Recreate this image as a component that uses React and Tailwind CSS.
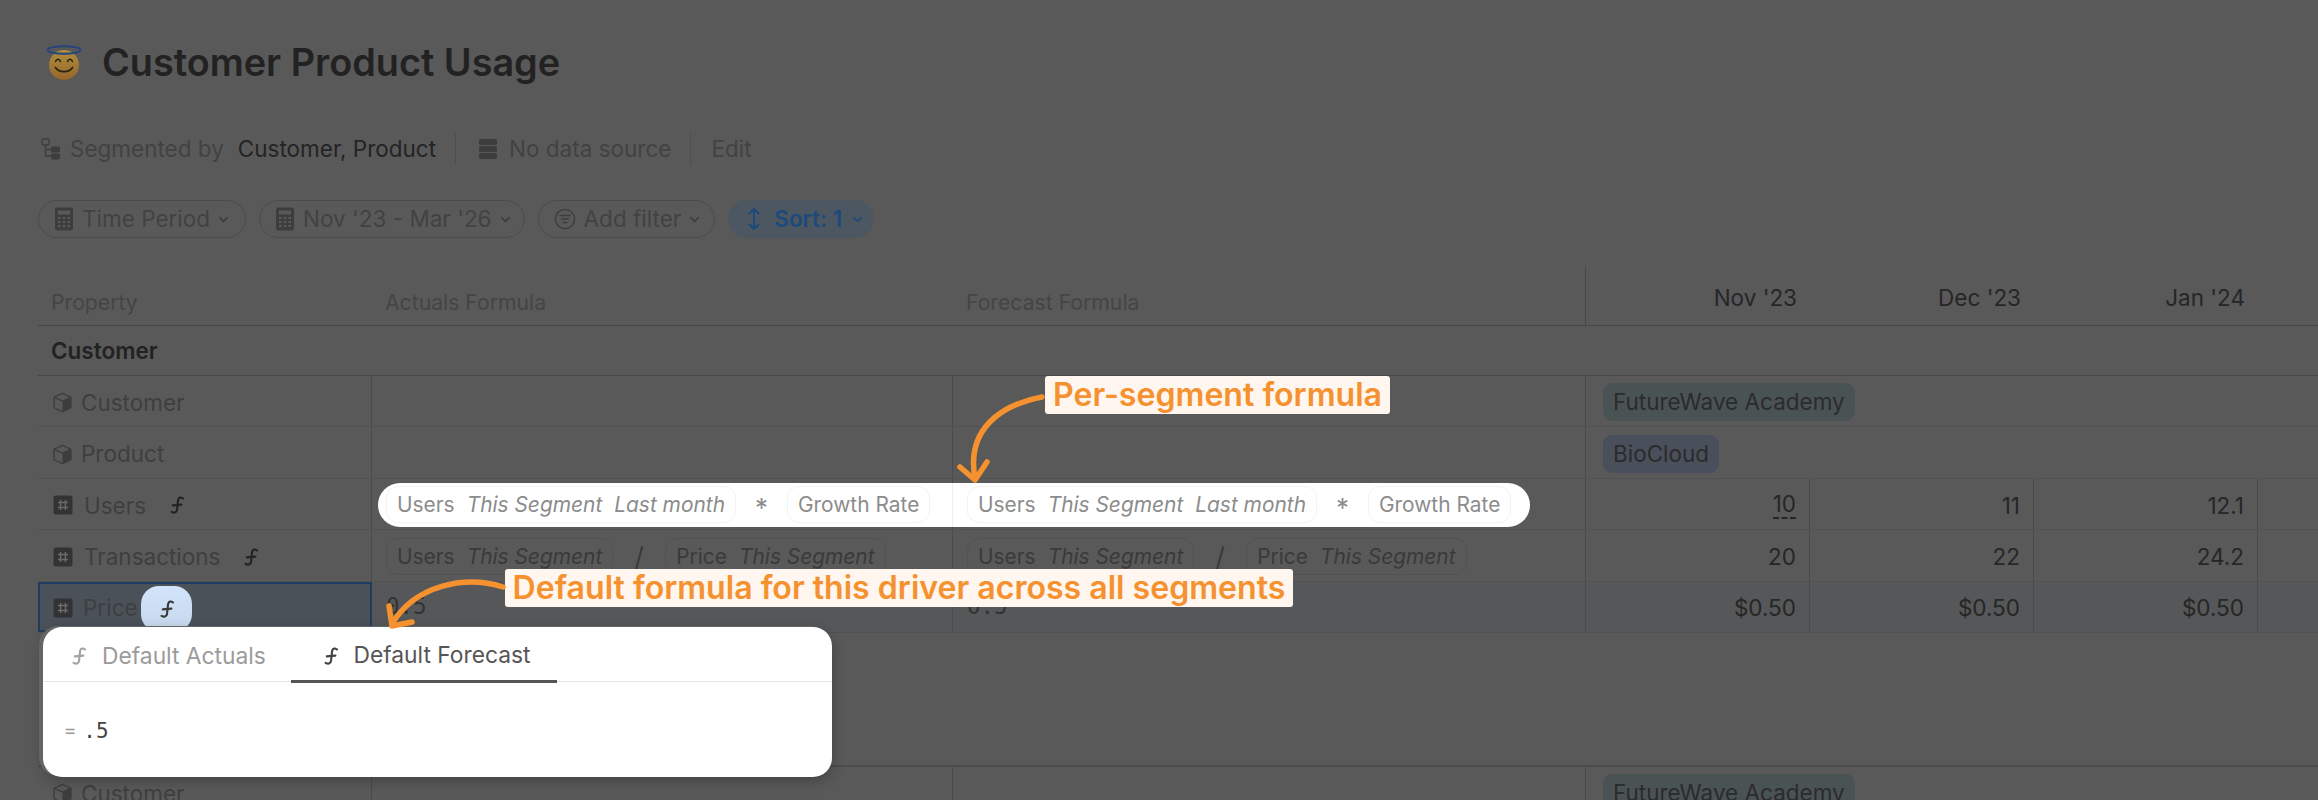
import React from "react";
import { ChevronDown } from "lucide-react";

const FONT = "font-['Inter','Noto_Sans',sans-serif]";
const MONO = "font-['DejaVu_Sans_Mono','Liberation_Mono',monospace]";

const FxIcon = ({ className = "w-[14px] h-[18px] text-[#222222]" }) => (
  <svg viewBox="0 0 14 18" fill="none" className={className}>
    <path
      d="M13 2.5C11 1 8.7 1.2 8.1 4L7 14C6.6 16.8 4 17.2 1.6 15.8"
      stroke="currentColor"
      strokeWidth="2.1"
      strokeLinecap="round"
    />
    <path d="M2.8 9.4L11.4 8.6" stroke="currentColor" strokeWidth="2.1" strokeLinecap="round" />
  </svg>
);

const CubeIcon = () => (
  <svg viewBox="0 0 20 20" className="w-[21px] h-[21px] shrink-0 text-[#3d3d3d]">
    <path d="M10 1.4 18 5v10l-8 3.8L2 15V5z" fill="none" stroke="currentColor" strokeWidth="1.3" strokeLinejoin="round" />
    <path d="M2.4 5.2 10 8.6l7.6-3.4" fill="none" stroke="currentColor" strokeWidth="1.3" />
    <path d="M10 8.6 18 5v10l-8 3.8z" fill="currentColor" />
  </svg>
);

const HashIcon = () => (
  <svg viewBox="0 0 20 20" className="w-[20px] h-[20px] shrink-0">
    <rect x="0.5" y="0.5" width="19" height="19" rx="2.5" fill="#333333" />
    <path d="M7.6 5v10M12.4 5v10M5 7.6h10M5 12.4h10" stroke="#6a6a6a" strokeWidth="1.5" />
  </svg>
);

const CalcIcon = () => (
  <svg viewBox="0 0 20 24" className="w-[20px] h-[24px] shrink-0">
    <rect x="1" y="0.5" width="18" height="23" rx="2.5" fill="#3d3d3d" />
    <rect x="4" y="3.5" width="12" height="4" fill="#595959" />
    <path
      d="M4 11h2.6M8.7 11h2.6M13.4 11h2.6M4 15h2.6M8.7 15h2.6M13.4 15h2.6M4 19h2.6M8.7 19h2.6M13.4 19h2.6"
      stroke="#595959"
      strokeWidth="1.8"
    />
  </svg>
);

const TreeIcon = () => (
  <svg viewBox="0 0 20 22" className="w-[20px] h-[22px] shrink-0">
    <rect x="1" y="1" width="7" height="6" rx="1.4" fill="none" stroke="#3d3d3d" strokeWidth="1.4" />
    <path d="M4.5 7v11h6M4.5 11.5h6" fill="none" stroke="#3d3d3d" strokeWidth="1.4" />
    <rect x="10" y="8.5" width="9" height="6" rx="1.4" fill="#3d3d3d" />
    <rect x="10" y="15.5" width="9" height="6" rx="1.4" fill="#3d3d3d" />
  </svg>
);

const StackIcon = () => (
  <svg viewBox="0 0 18 20" className="w-[18px] h-[20px] shrink-0">
    <rect x="0" y="0" width="18" height="6" rx="1.5" fill="#3d3d3d" />
    <rect x="0" y="7" width="18" height="6" rx="1.5" fill="#3d3d3d" />
    <rect x="0" y="14" width="18" height="6" rx="1.5" fill="#3d3d3d" />
  </svg>
);

const FilterIcon = () => (
  <svg viewBox="0 0 22 22" fill="none" className="w-[22px] h-[22px] shrink-0">
    <circle cx="11" cy="11" r="9.6" stroke="#3d3d3d" strokeWidth="1.4" />
    <path d="M6 7.6h10M7.6 11h6.8M9.4 14.4h3.2" stroke="#3d3d3d" strokeWidth="1.5" strokeLinecap="round" />
  </svg>
);

const SortIcon = () => (
  <svg viewBox="0 0 14 24" fill="none" className="w-[14px] h-[24px] shrink-0">
    <path d="M7 2v20M2.5 6.5 7 2l4.5 4.5M2.5 17.5 7 22l4.5-4.5" stroke="#1c4a7c" strokeWidth="2" strokeLinecap="round" strokeLinejoin="round" />
  </svg>
);

const HaloEmoji = () => (
  <svg viewBox="0 0 36 36" className="w-[36px] h-[36px] shrink-0">
    <defs>
      <linearGradient id="face" x1="0" y1="0" x2="0" y2="1">
        <stop offset="0" stopColor="#b08f40" />
        <stop offset="1" stopColor="#96652a" />
      </linearGradient>
    </defs>
    <circle cx="18" cy="21" r="15" fill="url(#face)" />
    <path d="M9.5 17.5c1-3 4-3 5 0M21.5 17.5c1-3 4-3 5 0" fill="none" stroke="#2e2210" strokeWidth="1.5" strokeLinecap="round" />
    <path d="M9.5 23.5c3.5 5.5 13.5 5.5 17 0" fill="none" stroke="#2e2210" strokeWidth="1.7" strokeLinecap="round" />
    <ellipse cx="18" cy="6" rx="16.5" ry="3.8" fill="none" stroke="#24467c" strokeWidth="2" />
  </svg>
);

const FilterChip = ({ icon, label, className = "pr-[14px]" }) => (
  <div className={`h-[38px] flex items-center gap-[8px] rounded-full border border-[#4c4c4c] pl-[15px] text-[#424242] ${className}`}>
    {icon}
    <span>{label}</span>
    <ChevronDown className="w-[15px] h-[15px] text-[#3d3d3d] ml-[-2px]" strokeWidth={2.4} />
  </div>
);

const FormulaChip = ({ parts, light }) => (
  <div
    className={`h-[37px] flex items-center gap-[12px] rounded-[12px] border px-[10px] whitespace-nowrap text-[20.9px] ${
      light ? "border-[#f2f2f2] text-[#8c8c8c]" : "border-[#525252] text-[#3a3a3a]"
    }`}
  >
    {parts.map(([text, italic]) => (
      <span key={text} className={italic ? "italic" : ""}>
        {text}
      </span>
    ))}
  </div>
);

const usersFormula = () => (
  <>
    <FormulaChip light parts={[["Users"], ["This Segment", true], ["Last month", true]]} />
    <span className="w-[51px] text-center text-[26px] pt-[6px] text-[#8c8c8c]">*</span>
    <FormulaChip light parts={[["Growth Rate"]]} />
  </>
);

const TransactionsFormula = () => (
  <>
    <FormulaChip parts={[["Users"], ["This Segment", true]]} />
    <span className="w-[52px] text-center text-[#3a3a3a] text-[26px]">/</span>
    <FormulaChip parts={[["Price"], ["This Segment", true]]} />
  </>
);

const RowLabel = ({ icon, label, fx }) => (
  <div
    className={`h-full flex items-center pt-[3px] border-r border-[#4a4a4a] text-[#3f3f3f] ${
      fx ? "pl-[15px] gap-[11px]" : "pl-[14px] gap-[8px]"
    }`}
  >
    {icon}
    <span>{label}</span>
    {fx && <span className="ml-[13px] flex"><FxIcon /></span>}
  </div>
);

const MonthCells = ({ values, dashed }) =>
  values.map((v, i) => (
    <div key={i} className="h-full flex items-center justify-end pt-[3px] pr-[13px] border-r border-[#4a4a4a] text-[#262626]">
      <span className={dashed && i === 0 ? "border-b-2 border-dashed border-[#262626] leading-[26px]" : ""}>{v}</span>
    </div>
  ));

const COLS = "grid grid-cols-[334px_581px_633px_224px_224px_224px_224px]";

const Row = ({ children, className = "" }) => (
  <div className={`${COLS} h-[51.4px] border-b border-[#525252] relative w-[2444px] ${className}`}>{children}</div>
);

const EmptyCell = () => <div className="h-full border-r border-[#4a4a4a]" />;

const Tag = ({ label, className }) => (
  <div className="h-full col-span-4 flex items-center pl-[17px] pt-[2px] text-[#2b2b2b]">
    <span className={`h-[38px] flex items-center px-[10px] rounded-[9px] ${className}`}>{label}</span>
  </div>
);

const Callout = ({ className, children }) => (
  <div className={`absolute z-30 h-[38px] flex items-center justify-center rounded-[3px] bg-[#fff6ef] text-[#f5922f] font-semibold text-[32.1px] whitespace-nowrap ${className}`}>
    {children}
  </div>
);

export default function App() {
  return (
    <div className={`${FONT} relative w-[2318px] h-[800px] overflow-hidden bg-[#595959] text-[22.5px] pl-[38px] pt-[42px]`}>
      {/* 제목 */}
      <div className="h-[40px] flex items-center gap-[20px] pl-[8px]">
        <HaloEmoji />
        <h1 className="text-[37.8px] font-semibold text-[#222222] whitespace-nowrap">Customer Product Usage</h1>
      </div>

      <div className="h-[32px] mt-[51px] flex items-center pl-[3px] whitespace-nowrap">
        <TreeIcon />
        <span className="ml-[9px] text-[#424242]">Segmented by</span>
        <span className="ml-[14px] text-[#242424]">Customer, Product</span>
        <div className="w-px h-[32px] bg-[#4e4e4e] ml-[19px]" />
        <span className="ml-[23px] flex"><StackIcon /></span>
        <span className="ml-[12px] text-[#424242]">No data source</span>
        <div className="w-px h-[32px] bg-[#4e4e4e] ml-[19px]" />
        <span className="ml-[20px] text-[#424242]">Edit</span>
      </div>

      <div className="h-[38px] mt-[35px] flex items-center gap-[13px] whitespace-nowrap">
        <FilterChip icon={<CalcIcon />} label="Time Period" />
        <FilterChip icon={<CalcIcon />} label="Nov '23 - Mar '26" className="pr-[11px]" />
        <FilterChip icon={<FilterIcon />} label="Add filter" className="pr-[12px]" />
        <div className="h-[38px] flex items-center gap-[13px] rounded-full bg-[#4d5761] pl-[19px] pr-[9px] font-semibold text-[#1c4a7c]">
          <SortIcon />
          <span>Sort: 1</span>
          <ChevronDown className="w-[15px] h-[15px] ml-[-5px]" strokeWidth={2.8} />
        </div>
      </div>

      {/* 테이블 */}
      <div className="mt-[29px] w-[2444px]">
        <div className={`${COLS} h-[59px] border-b border-[#474747] text-[21.2px] text-[#454545]`}>
          <div className="flex items-end pb-[6px] pl-[13px]">Property</div>
          <div className="flex items-end pb-[6px] pl-[13px]">Actuals Formula</div>
          <div className="flex items-end pb-[6px] pl-[13px] border-r border-[#474747]">Forecast Formula</div>
          {["Nov '23", "Dec '23", "Jan '24"].map((m) => (
            <div key={m} className="flex items-end justify-end pb-[10px] pr-[13px] text-[22.5px] text-[#262626]">
              {m}
            </div>
          ))}
        </div>
        <div className="h-[50px] flex items-center pl-[13px] border-b border-[#474747] font-semibold text-[#222222]">Customer</div>

        <Row>
          <RowLabel icon={<CubeIcon />} label="Customer" />
          <EmptyCell />
          <EmptyCell />
          <Tag label="FutureWave Academy" className="bg-[#4a5354]" />
        </Row>
        <Row>
          <RowLabel icon={<CubeIcon />} label="Product" />
          <EmptyCell />
          <EmptyCell />
          <Tag label="BioCloud" className="bg-[#4a4f5c]" />
        </Row>
        <Row>
          <RowLabel icon={<HashIcon />} label="Users" fx />
          <EmptyCell />
          <EmptyCell />
          <MonthCells values={["10", "11", "12.1", ""]} dashed />
          {/* 강조된 수식 행 */}
          <div className="absolute z-10 left-[340px] top-[4px] w-[1152px] h-[44px] rounded-full bg-white flex">
            <div className="w-[575px] h-full flex items-center pl-[8px] border-r border-[#eeeeee]">
              {usersFormula()}
            </div>
            <div className="h-full flex items-center pl-[14px]">{usersFormula()}</div>
          </div>
        </Row>
        <Row>
          <RowLabel icon={<HashIcon />} label="Transactions" fx />
          <div className="h-full flex items-center pl-[14px] pt-[2px] border-r border-[#4a4a4a]">
            <TransactionsFormula />
          </div>
          <div className="h-full flex items-center pl-[14px] pt-[2px] border-r border-[#4a4a4a]">
            <TransactionsFormula />
          </div>
          <MonthCells values={["20", "22", "24.2", ""]} />
        </Row>
        <Row className="bg-[#555759]">
          <div className="h-full flex items-center pl-[13px] pt-[2px] gap-[10px] border-2 border-[#1f3d60] bg-[#4a5159] text-[#3f3f3f]">
            <HashIcon />
            <span>Price</span>
            <div className="absolute left-[103px] top-[4px] w-[51px] h-[46px] rounded-[18px] bg-gradient-to-b from-[#d2e4fa] to-[#c6d8ec] flex items-center justify-center">
              <FxIcon className="w-[14px] h-[18px] text-[#3a3a3a]" />
            </div>
          </div>
          <div className={`${MONO} h-full flex items-center pl-[14px] border-r border-[#4a4a4a] text-[#333333]`}>0.5</div>
          <div className={`${MONO} h-full flex items-center pl-[14px] border-r border-[#4a4a4a] text-[#333333]`}>0.5</div>
          <MonthCells values={["$0.50", "$0.50", "$0.50", ""]} />
        </Row>

        {/* 두 번째 세그먼트 */}
        <div className="h-[134px] border-b-2 border-[#4c4c4c]" />
        <Row>
          <RowLabel icon={<CubeIcon />} label="Customer" />
          <EmptyCell />
          <EmptyCell />
          <Tag label="FutureWave Academy" className="bg-[#4a5354]" />
        </Row>
      </div>

      {/* 팝오버 */}
      <div className="absolute z-20 left-[43px] top-[627px] w-[789px] h-[150px] rounded-[19px] bg-white shadow-[-4px_-1px_0_0_#656565,0_4px_14px_rgba(0,0,0,0.25)]">
        <div className="h-[55px] flex border-b border-[#e6e6e6] text-[#9b9b9b] text-[22.8px]">
          <div className="w-[248px] h-full flex items-center gap-[16px] pl-[29px] pt-[4px]">
            <FxIcon className="w-[14px] h-[18px] text-[#a3a3a3]" />
            <span>Default Actuals</span>
          </div>
          <div className="w-[266px] h-[56px] flex items-center justify-center gap-[15px] pt-[4px] pl-[7px] border-b-[3px] border-[#555555] text-[#555555]">
            <FxIcon className="w-[14px] h-[18px] text-[#444444]" />
            <span>Default Forecast</span>
          </div>
        </div>
        <div className={`${MONO} h-[95px] flex items-center pl-[22px] pt-[4px] text-[21px]`}>
          <span className="text-[#9b9b9b] text-[17px]">=</span>
          <span className="ml-[8px] text-[#444444]">.5</span>
        </div>
      </div>

      {/* 설명 라벨과 화살표 */}
      <Callout className="left-[1045px] top-[376px] w-[345px]">Per-segment formula</Callout>
      <Callout className="left-[505px] top-[569px] w-[788px]">Default formula for this driver across all segments</Callout>
      <svg viewBox="0 0 2318 800" fill="none" className="absolute z-30 left-0 top-0 w-[2318px] h-[800px] pointer-events-none">
        <g stroke="#f5922f" strokeWidth="5.5" strokeLinecap="round" strokeLinejoin="round">
          <path d="M1042 397C1000 405 966 430 975 478" />
          <path d="M960 467L975 480L987 462" />
          <path d="M503 587C465 575 415 585 392 624" />
          <path d="M389 606L392 626L412 622" />
        </g>
      </svg>
    </div>
  );
}
